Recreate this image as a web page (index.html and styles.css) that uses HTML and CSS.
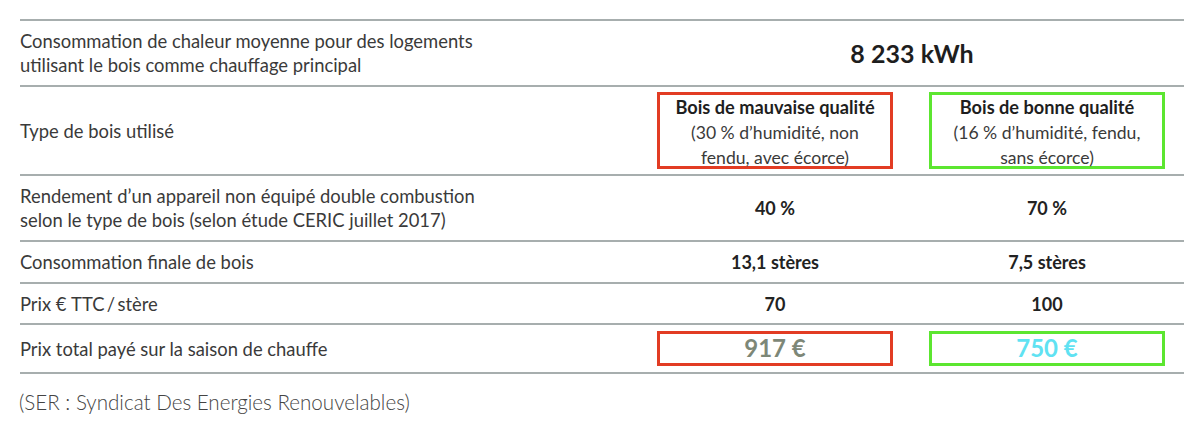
FILE: index.html
```html
<!DOCTYPE html>
<html lang="fr">
<head>
<meta charset="utf-8">
<title>Bois</title>
<link rel="stylesheet" href="styles.css">
</head>
<body>
<div class="table">
  <div class="row r1">
    <div class="label">Consommation de chaleur moyenne pour des logements<br>utilisant le bois comme chauffage principal</div>
    <div class="val span big">8&#8239;233&#8239;kWh</div>
  </div>
  <div class="row r2">
    <div class="label">Type de bois utilisé</div>
    <div class="val"><div class="box red"><strong>Bois de mauvaise qualité</strong><br>(30&#8239;% d’humidité, non<br>fendu, avec écorce)</div></div>
    <div class="val"><div class="box green"><strong>Bois de bonne qualité</strong><br>(16&#8239;% d’humidité, fendu,<br>sans écorce)</div></div>
  </div>
  <div class="row r3">
    <div class="label">Rendement d’un appareil non équipé double combustion<br>selon le type de bois (selon étude CERIC juillet 2017)</div>
    <div class="val b">40&#8239;%</div>
    <div class="val b">70&#8239;%</div>
  </div>
  <div class="row r4">
    <div class="label">Consommation finale de bois</div>
    <div class="val b">13,1 stères</div>
    <div class="val b">7,5 stères</div>
  </div>
  <div class="row r5">
    <div class="label">Prix €&#8239;TTC&#8201;/&#8201;stère</div>
    <div class="val b">70</div>
    <div class="val b">100</div>
  </div>
  <div class="row r6">
    <div class="label">Prix total payé sur la saison de chauffe</div>
    <div class="val"><div class="box red price grey">917 €</div></div>
    <div class="val"><div class="box green price cyan">750 €</div></div>
  </div>
</div>
<p class="source">(SER : Syndicat Des Energies Renouvelables)</p>
</body>
</html>
```

FILE: styles.css
```css
html, body {
  margin: 0;
  padding: 0;
  background: #ffffff;
}
body {
  font-family: Lato, "Liberation Sans", sans-serif;
  color: #333333;
  padding-top: 19px;
}
.table {
  margin-left: 20px;
  width: 1164px;
  border-top: 2px solid #a7aeae;
}
.row {
  display: grid;
  grid-template-columns: 620px 270px 274px;
  align-items: center;
  border-bottom: 2px solid #a7aeae;
  box-sizing: border-box;
}
.r1 { height: 66px; }
.r2 { height: 89px; }
.r3 { height: 66px; }
.r4 { height: 42px; }
.r5 { height: 41px; }
.r6 { height: 49px; }
.label {
  font-size: 18.4px;
  line-height: 24px;
  color: #3a3a3a;
}
.val {
  display: flex;
  justify-content: center;
  align-items: center;
  text-align: center;
  font-size: 18px;
}
.span { grid-column: 2 / 4; }
.big {
  font-size: 25px;
  font-weight: 700;
  color: #1e1e1e;
}
.b {
  font-weight: 700;
  color: #222222;
}
.box {
  box-sizing: border-box;
  width: 236px;
  border: 3px solid;
  font-size: 17.6px;
  line-height: 25px;
  color: #3a3a3a;
  padding: 0;
}
.box strong { color: #1e1e1e; font-size: 18.2px; }
.red { border-color: #e23c23; }
.green { border-color: #5ce630; }
.r2 .box { height: 77px; }
.price {
  height: 35px;
  font-size: 24px;
  font-weight: 700;
  line-height: 28px;
}
.grey { color: #7d8777; }
.cyan { color: #5fe2f2; }
.source {
  margin: 16px 0 0 19px;
  font-size: 20.6px;
  font-weight: 300;
  color: #444444;
}
```
